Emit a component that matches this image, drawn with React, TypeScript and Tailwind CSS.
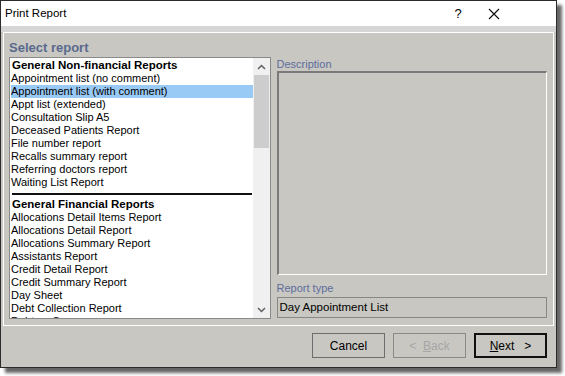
import React from "react";

const nonFin = [
  "Appointment list (no comment)",
  "Appointment list (with comment)",
  "Appt list (extended)",
  "Consultation Slip A5",
  "Deceased Patients Report",
  "File number report",
  "Recalls summary report",
  "Referring doctors report",
  "Waiting List Report",
];
const fin = [
  "Allocations Detail Items Report",
  "Allocations Detail Report",
  "Allocations Summary Report",
  "Assistants Report",
  "Credit Detail Report",
  "Credit Summary Report",
  "Day Sheet",
  "Debt Collection Report",
  "Debtors Summary",
];

export default function App() {
  const font = { fontFamily: "'Liberation Sans', Arial, sans-serif" };
  return (
    <div className="w-[565px] h-[376px] bg-white relative overflow-hidden" style={font}>
      <div className="w-[557px] h-[368px] border border-[#2b2b2b] bg-[#c8c7c2] flex flex-col shadow-[5px_5px_3px_rgba(0,0,0,0.6)]">
        {/* title bar */}
        <div className="h-[25px] bg-white flex items-center shrink-0">
          <span className="ml-[4px] text-[11.5px] text-black">Print Report</span>
          <span className="ml-auto w-[36px] text-center text-[13px] text-black">?</span>
          <span className="w-[36px] mr-[44px] flex justify-center">
            <svg width="12" height="12" viewBox="0 0 12 12"><path d="M1 1L11 11M11 1L1 11" stroke="#111" strokeWidth="1.2" /></svg>
          </span>
        </div>
        <div className="h-[6px] bg-[#d6d6d6] shrink-0" />
        {/* frame */}
        <div className="mx-[2px] h-[294px] border border-white flex flex-col px-[5px] shrink-0">
          <div className="h-[24px] flex items-end pb-[3px] text-[13px] font-bold text-[#5a6a8e] leading-none">
            Select report
          </div>
          <div className="flex gap-[7px]">
            {/* list box */}
            <div className="w-[262px] h-[262px] border border-[#8a8a8a] bg-white flex overflow-hidden">
              <div className="flex-1 pl-[1px] pt-[1px] overflow-hidden text-[11px] leading-[13px] text-black">
                <div className="font-bold text-[11.5px] pl-[1px] h-[13px]">General Non-financial Reports</div>
                {nonFin.map((t, i) => (
                  <div key={t} className={"h-[13px] whitespace-nowrap " + (i === 1 ? "bg-[#99c9f5]" : "")}>{t}</div>
                ))}
                <div className="h-[4px]" />
                <div className="h-[2px] mx-[1px] bg-[#111]" />
                <div className="h-[3px]" />
                <div className="font-bold text-[11.5px] pl-[1px] h-[13px]">General Financial Reports</div>
                {fin.map((t) => (
                  <div key={t} className="h-[13px] whitespace-nowrap">{t}</div>
                ))}
              </div>
              <div className="w-[17px] bg-[#f0f0f0] flex flex-col items-center">
                <div className="h-[17px] flex items-center justify-center">
                  <svg width="9" height="6" viewBox="0 0 9 6"><path d="M1 5L4.5 1.5L8 5" fill="none" stroke="#606060" strokeWidth="1.5" /></svg>
                </div>
                <div className="w-[15px] h-[73px] bg-[#cdcdcd]" />
                <div className="flex-1" />
                <div className="h-[17px] flex items-center justify-center">
                  <svg width="9" height="6" viewBox="0 0 9 6"><path d="M1 1L4.5 4.5L8 1" fill="none" stroke="#606060" strokeWidth="1.5" /></svg>
                </div>
              </div>
            </div>
            {/* right side */}
            <div className="w-[272px] flex flex-col -ml-[1px]">
              <div className="h-[14px] text-[11px] leading-[14px] text-[#5d6d9c]">Description</div>
              <div className="h-[204px] border-t-2 border-l-2 border-r border-b border-[#7a7a7a] mr-[1px]" style={{ borderRightColor: "#fff", borderBottomColor: "#fff" }} />
              <div className="h-[20px] flex items-end text-[11px] leading-[14px] text-[#5d6d9c]">Report type</div>
              <div className="mt-[2px] h-[21px] border border-[#888] flex items-center pl-[2px] text-[11.5px] text-black mr-[1px]">Day Appointment List</div>
            </div>
          </div>
        </div>
        {/* buttons */}
        <div className="flex justify-end gap-[8px] pr-[9px] pt-[7px]">
          <div className="w-[73px] h-[25px] border border-[#6d6d6d] flex items-center justify-center text-[12px] text-black">Cancel</div>
          <div className="w-[73px] h-[25px] border border-[#8a8a8a] flex items-center justify-center text-[12px] text-[#a6a6a6]">
            &lt;&nbsp;&nbsp;<span className="underline">B</span>ack
          </div>
          <div className="w-[73px] h-[25px] border-2 border-[#111] flex items-center justify-center text-[12px] text-black">
            <span className="underline">N</span>ext&nbsp;&nbsp;&nbsp;&gt;
          </div>
        </div>
      </div>
    </div>
  );
}
